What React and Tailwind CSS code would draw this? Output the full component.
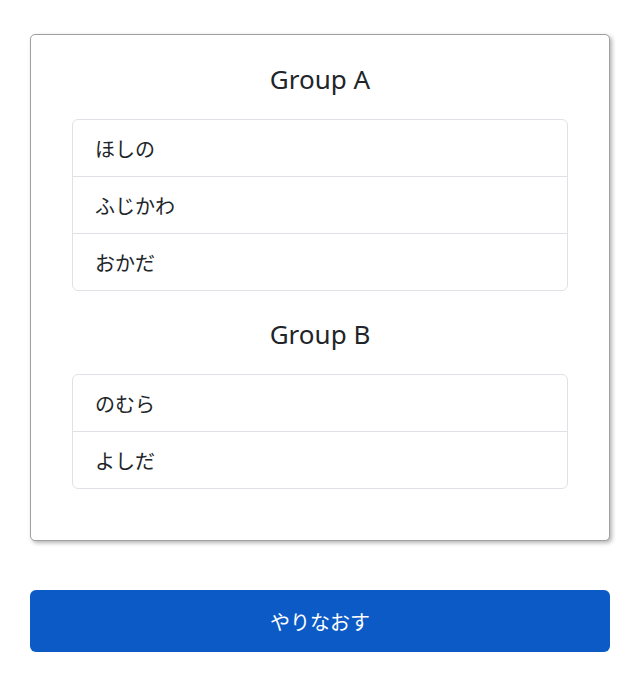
const groups = [
  { name: 'Group A', members: ['ほしの', 'ふじかわ', 'おかだ'] },
  { name: 'Group B', members: ['のむら', 'よしだ'] },
]

export default function App() {
  return (
    <div
      className="w-[640px] px-[30px] pt-[34px] text-[#212529]"
      style={{ fontFamily: '"Noto Sans", "Noto Sans CJK JP", sans-serif' }}
    >
      {/* カード */}
      <div className="rounded-[5px] border border-[#a0a0a0] bg-white px-[41px] pt-[29px] pb-[51px] shadow-[2px_2px_4px_rgba(0,0,0,0.3)]">
        {groups.map((g, i) => (
          <div key={g.name} className={i > 0 ? 'mt-[28px]' : ''}>
            <h2 className="mb-[24px] text-center text-[26px] leading-[31px]">{g.name}</h2>
            <ul className="rounded-[6px] border border-[#dee2e6]">
              {g.members.map((m, j) => (
                <li
                  key={m}
                  className={`flex items-center px-[22px] pt-[3px] text-[20px] ${j > 0 ? 'h-[57px] border-t border-[#dee2e6]' : 'h-[56px]'}`}
                >
                  {m}
                </li>
              ))}
            </ul>
          </div>
        ))}
      </div>

      <button className="mt-[49px] flex h-[62px] w-full items-center justify-center rounded-[6px] bg-[#0b5ac6] pt-[3px] text-[20px] text-white">
        やりなおす
      </button>
    </div>
  )
}
